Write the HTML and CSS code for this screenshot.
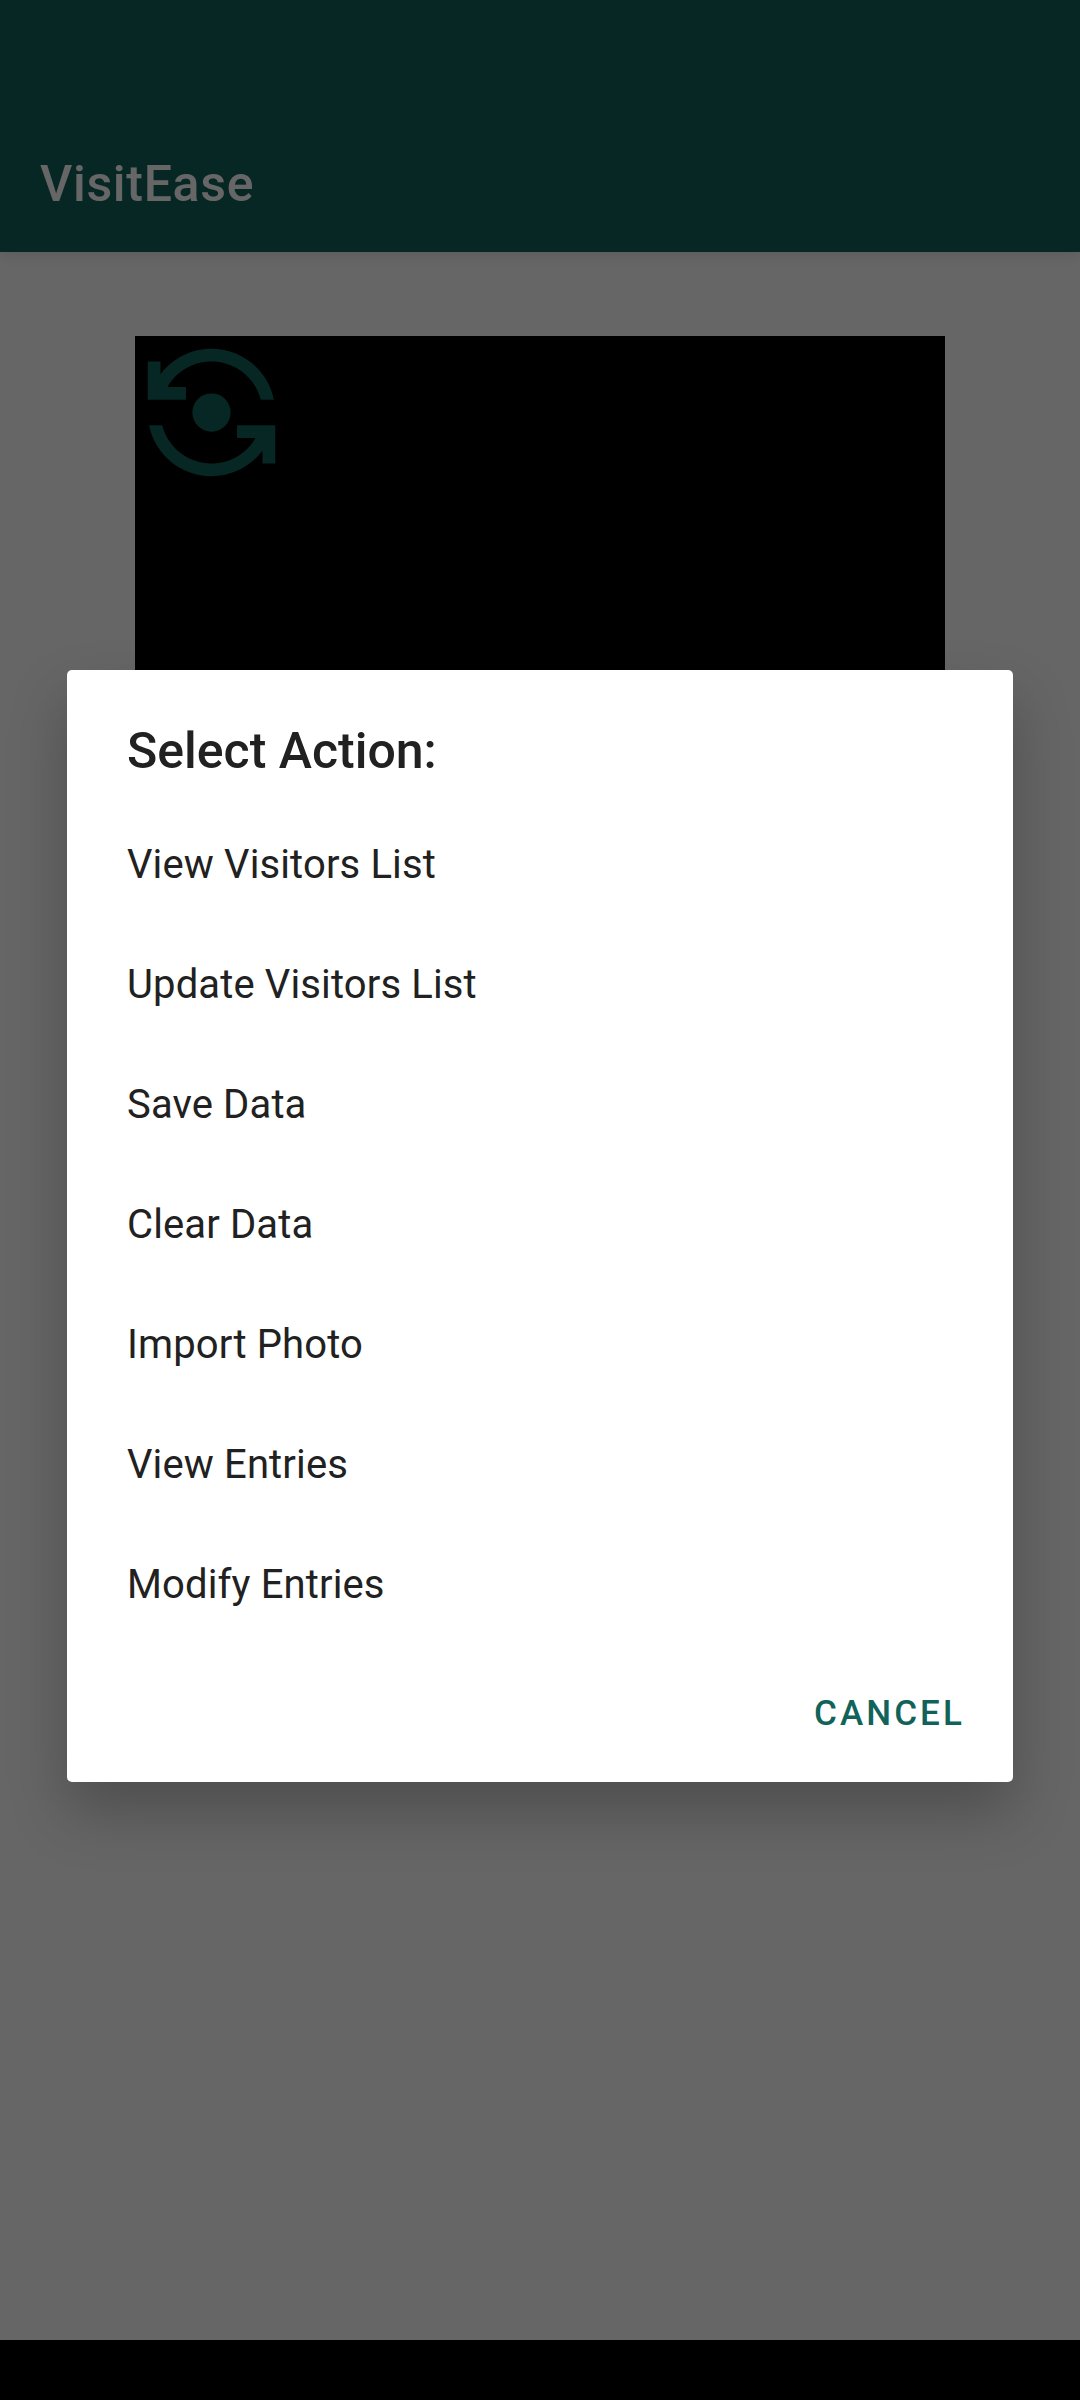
FILE: index.html
```html
<!DOCTYPE html>
<html lang="en">
<head>
<meta charset="utf-8">
<title>VisitEase</title>
<link rel="stylesheet" href="styles.css">
</head>
<body>
<div class="app">
  <header class="app-bar"><h1 class="app-title">VisitEase</h1></header>
  <main class="content">
    <div class="camera">
      <svg class="flip-icon" viewBox="0 0 24 24" aria-hidden="true">
        <circle cx="12" cy="12" r="3"/>
        <path d="M8 10V8H5.09C6.47 5.61 9.04 4 12 4c3.72 0 6.85 2.56 7.74 6h2.06c-.93-4.56-4.96-8-9.8-8-3.27 0-6.18 1.58-8 4.01V4H2v6h6z"/>
        <path d="M16 14v2h2.91c-1.38 2.39-3.95 4-6.91 4-3.72 0-6.85-2.56-7.74-6H2.2c.93 4.56 4.96 8 9.8 8 3.27 0 6.18-1.58 8-4.01V20h2v-6h-6z"/>
      </svg>
    </div>
  </main>
  <div class="nav-bar"></div>
</div>
<div class="scrim">
  <section class="dialog" role="dialog" aria-labelledby="dialog-title">
    <h2 class="dialog-title" id="dialog-title">Select Action:</h2>
    <ul class="actions">
      <li class="action">View Visitors List</li>
      <li class="action">Update Visitors List</li>
      <li class="action">Save Data</li>
      <li class="action">Clear Data</li>
      <li class="action">Import Photo</li>
      <li class="action">View Entries</li>
      <li class="action">Modify Entries</li>
    </ul>
    <div class="buttons"><button class="cancel" type="button">CANCEL</button></div>
  </section>
</div>
</body>
</html>
```
FILE: styles.css
```css
* { box-sizing: border-box; }

body {
  margin: 0;
  font-family: Roboto, "Liberation Sans", sans-serif;
}

.app {
  display: flex;
  flex-direction: column;
  height: 2400px;
  background: #fff;
}

.app-bar {
  display: flex;
  align-items: flex-end;
  height: 252px;
  padding: 0 40px 38px;
  background: #11635a;
  box-shadow: 0 3px 14px rgba(0, 0, 0, .12);
}

.app-title {
  margin: 0;
  color: #fff;
  font-size: 50px;
  font-weight: 500;
  line-height: 60px;
  letter-spacing: .7px;
}

.content {
  flex: 1;
  padding: 84px 135px 0;
}

.camera {
  height: 810px;
  background: #000;
}

.flip-icon {
  display: block;
  width: 153px;
  height: 153px;
  fill: #11635a;
}

.nav-bar {
  height: 60px;
  background: #000;
}

.scrim {
  position: absolute;
  inset: 0;
  height: 2400px;
  padding: 670px 67px 0;
  background: rgba(0, 0, 0, .6);
}

.dialog {
  height: 1112px;
  padding-top: 45px;
  border-radius: 5px;
  background: #fff;
  box-shadow: 0 30px 60px rgba(0, 0, 0, .24);
}

.dialog-title {
  margin: 0;
  padding: 6px 60px 0;
  color: #212121;
  font-size: 50px;
  font-weight: 500;
  line-height: 60px;
}

.actions {
  margin: 24px 0 0;
  padding: 0;
  list-style: none;
}

.action {
  height: 120px;
  padding: 0 60px;
  color: #212121;
  font-size: 40px;
  line-height: 120px;
  letter-spacing: .13px;
}

.buttons {
  display: flex;
  justify-content: flex-end;
  padding: 9px 48px 0;
}

.cancel {
  height: 120px;
  padding: 0;
  border: 0;
  background: none;
  color: #11635a;
  font: 500 35px/120px Roboto, "Liberation Sans", sans-serif;
  letter-spacing: 3.1px;
}
```
